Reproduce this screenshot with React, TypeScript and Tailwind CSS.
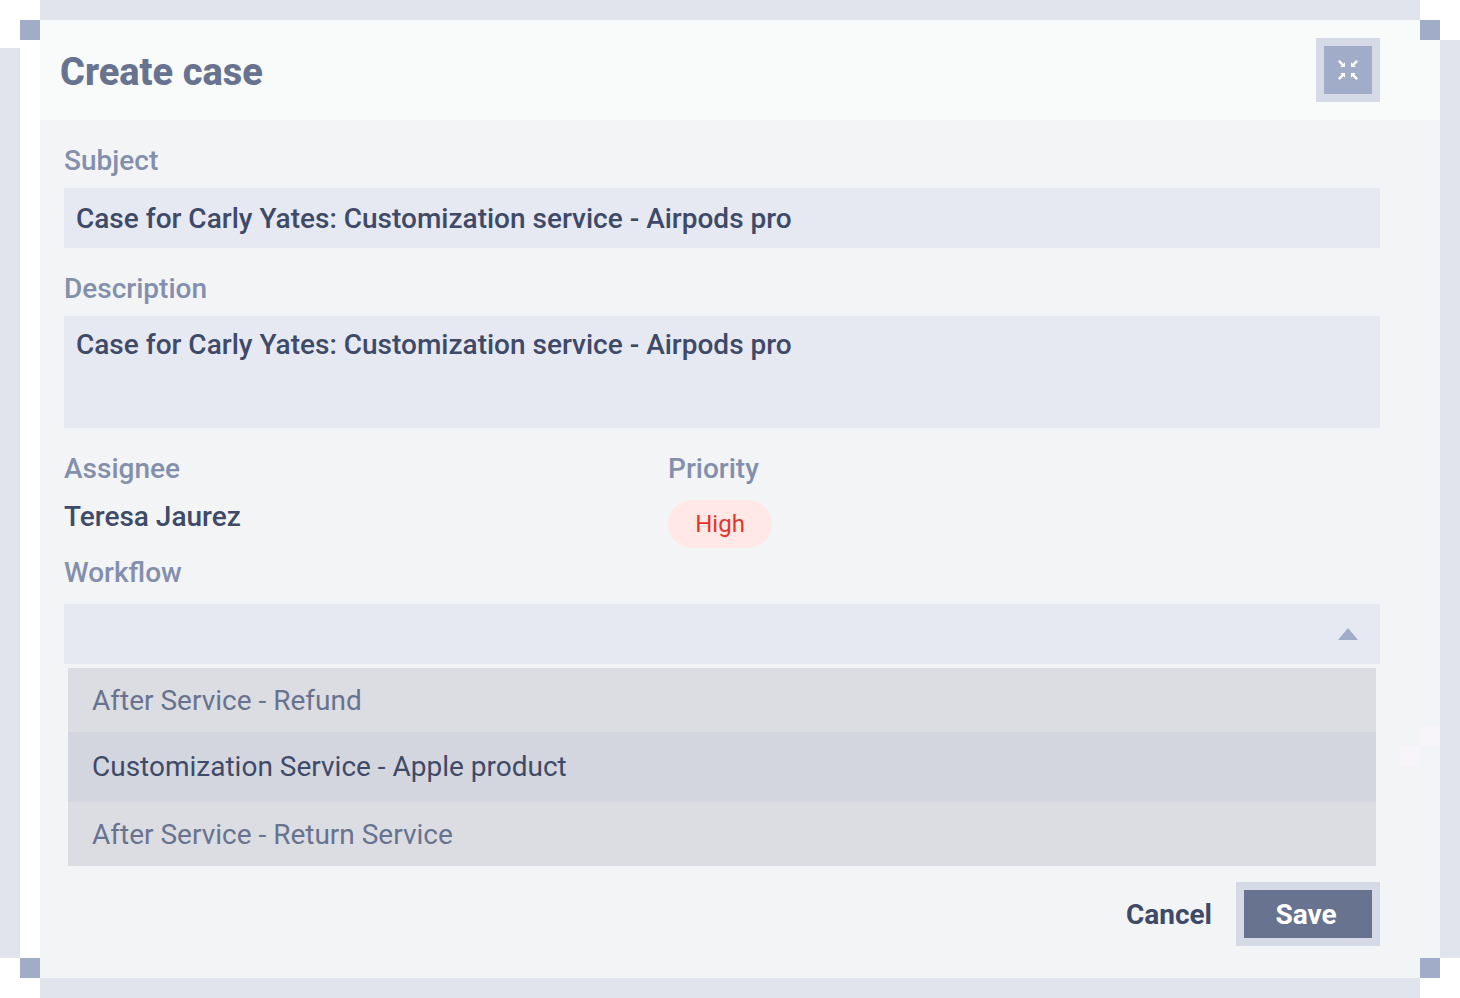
import { useState } from "react";

const workflows = [
  "After Service - Refund",
  "Customization Service - Apple product",
  "After Service - Return Service",
];

const labelClass = "block text-[28px] leading-[34px] font-medium text-[#8490ab]";
const fieldClass =
  "block w-full rounded-none bg-[#e6e9f1] px-3 text-[28px] font-medium text-[#3f4a68] outline-none";

function CollapseIcon() {
  return (
    <svg viewBox="0 0 20 20" className="size-5" aria-hidden="true">
      <g stroke="#fff" strokeWidth="2.4" fill="none">
        <path d="M0.9 0.9 5.5 5.5M19.1 0.9 14.5 5.5M0.9 19.1 5.5 14.5M19.1 19.1 14.5 14.5" />
      </g>
      <path
        fill="#fff"
        d="M7 2.2V7H2.2ZM13 2.2V7H17.8ZM7 17.8V13H2.2ZM13 17.8V13H17.8Z"
      />
    </svg>
  );
}

export default function App() {
  const [subject, setSubject] = useState("Case for Carly Yates: Customization service - Airpods pro");
  const [description, setDescription] = useState(
    "Case for Carly Yates: Customization service - Airpods pro",
  );
  const [workflow, setWorkflow] = useState("");

  return (
    <div className="grid min-h-screen grid-cols-[20px_20px_1fr_20px_20px] grid-rows-[20px_20px_1fr_20px_20px] bg-white font-[Roboto,sans-serif]">
      <div className="col-start-3 row-start-1 bg-[#e1e4ec]" />
      <div className="col-start-3 row-start-5 bg-[#e1e4ec]" />
      <div className="col-start-1 row-start-3 mt-2 bg-[#e1e4ec]" />
      <div className="col-start-5 row-start-3 bg-[#e1e4ec]" />

      <main className="relative col-span-2 col-start-3 row-span-3 row-start-2 flex flex-col bg-[#f3f4f6]">
        <header className="flex h-25 items-center justify-between bg-[#f9fbfa] pr-15 pl-5">
          <h1 className="pt-1 text-[38px] leading-12 font-extrabold text-[#68738f]">
            Create case
          </h1>
          <button
            type="button"
            aria-label="Collapse"
            className="flex size-16 items-center justify-center border-8 border-[#d6dae7] bg-[#a1acc9]"
          >
            <CollapseIcon />
          </button>
        </header>

        <form className="flex flex-col pt-6 pr-15 pb-8 pl-6" onSubmit={(e) => e.preventDefault()}>
          <label htmlFor="subject" className={labelClass}>
            Subject
          </label>
          <input
            id="subject"
            value={subject}
            onChange={(e) => setSubject(e.target.value)}
            className={`${fieldClass} mt-2.5 h-15`}
          />

          <label htmlFor="description" className={`${labelClass} mt-6`}>
            Description
          </label>
          <textarea
            id="description"
            value={description}
            onChange={(e) => setDescription(e.target.value)}
            className={`${fieldClass} mt-2.5 h-28 resize-none py-3 leading-[34px]`}
          />

          <dl className="mt-6 grid grid-cols-[45.9%_1fr]">
            <div>
              <dt className={labelClass}>Assignee</dt>
              <dd className="mt-3.5 text-[28px] leading-[34px] font-medium text-[#3f4a68]">
                Teresa Jaurez
              </dd>
            </div>
            <div>
              <dt className={labelClass}>Priority</dt>
              <dd className="mt-3.5 flex">
                <span className="flex h-12 w-26 items-center justify-center rounded-full bg-[#ffe8e6] text-2xl text-[#e0362c]">
                  High
                </span>
              </dd>
            </div>
          </dl>

          <label htmlFor="workflow" className={`${labelClass} mt-2`}>
            Workflow
          </label>
          <div className="relative mt-3.5">
            <select
              id="workflow"
              value={workflow}
              onChange={(e) => setWorkflow(e.target.value)}
              className={`${fieldClass} h-15 appearance-none`}
            >
              <option value="" />
              {workflows.map((name) => (
                <option key={name}>{name}</option>
              ))}
            </select>
            <svg
              viewBox="0 0 20 12"
              className="pointer-events-none absolute top-6 right-[22px] h-3 w-5"
              aria-hidden="true"
            >
              <path d="M10 0 20 12H0Z" fill="#a1acc9" />
            </svg>
          </div>

          <ul className="mx-1 mt-1 bg-[#dcdde2] text-[28px] leading-8 text-[#68738f]">
            {workflows.map((name, i) => (
              <li key={name}>
                <button
                  type="button"
                  onClick={() => setWorkflow(name)}
                  className={`block w-full px-6 text-left ${
                    i === 1 ? "h-[70px] bg-[#d3d6de] text-[#3f4a68]" : "h-16 pt-0.5"
                  }`}
                >
                  {name}
                </button>
              </li>
            ))}
          </ul>

          <div className="mt-4 flex items-center justify-end gap-6">
            <button type="button" className="pt-0.5 text-[28px] leading-8 font-bold text-[#3f4a68]">
              Cancel
            </button>
            <button
              type="submit"
              className="h-16 w-36 border-8 border-[#d6dae7] bg-[#68738f] pt-0.5 pr-1 text-[28px] leading-8 font-bold text-white"
            >
              Save
            </button>
          </div>
        </form>

        <div className="absolute right-0 bottom-[212px] grid grid-cols-2" aria-hidden="true">
          <div className="col-start-2 size-5 bg-[#f7f5fa]" />
          <div className="col-start-1 size-5 bg-[#f7f5fa]" />
        </div>
      </main>

      <div className="col-start-2 row-start-2 bg-[#a1acc9]" />
      <div className="z-10 col-start-4 row-start-2 bg-[#a1acc9]" />
      <div className="col-start-2 row-start-4 bg-[#a1acc9]" />
      <div className="z-10 col-start-4 row-start-4 bg-[#a1acc9]" />
    </div>
  );
}
